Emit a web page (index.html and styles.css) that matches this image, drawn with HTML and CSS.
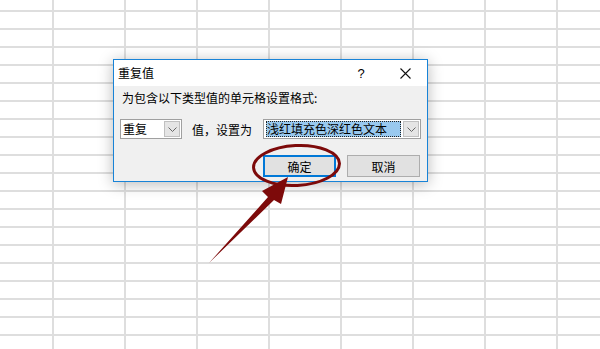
FILE: index.html
```html
<!DOCTYPE html>
<html lang="zh-CN">
<head>
    <meta charset="UTF-8">
    <meta name="viewport" content="width=device-width, initial-scale=1.0">
    <title>重复值</title>
    <link rel="stylesheet" href="styles.css">
</head>
<body>
    <div class="sheet"></div>

    <div class="dialog">
        <div class="titlebar">
            <span class="title">重复值</span>
            <span class="tb-btn help">?</span>
            <span class="tb-btn close">
                <svg width="11" height="11" viewBox="0 0 11 11">
                    <path d="M0.5 0.5 L10.5 10.5 M10.5 0.5 L0.5 10.5" stroke="#111" stroke-width="1.1" fill="none"/>
                </svg>
            </span>
        </div>
        <div class="dialog-body">
            <div class="label">为包含以下类型值的单元格设置格式:</div>
            <div class="row">
                <div class="combo small">
                    <span class="combo-text">重复</span>
                    <span class="drop">
                        <svg width="9" height="5" viewBox="0 0 9 5"><path d="M0.5 0.5 L4.5 4.5 L8.5 0.5" stroke="#666" fill="none"/></svg>
                    </span>
                </div>
                <span class="row-text">值，设置为</span>
                <div class="combo wide">
                    <span class="combo-text selected">浅红填充色深红色文本</span>
                    <span class="drop">
                        <svg width="9" height="5" viewBox="0 0 9 5"><path d="M0.5 0.5 L4.5 4.5 L8.5 0.5" stroke="#666" fill="none"/></svg>
                    </span>
                </div>
            </div>
            <div class="buttons">
                <button class="btn default">确定</button>
                <button class="btn">取消</button>
            </div>
        </div>
    </div>

    <!-- annotation drawn over the screenshot -->
    <svg class="mark" width="600" height="349" viewBox="0 0 600 349">
        <ellipse cx="296.5" cy="165.5" rx="43" ry="20" transform="rotate(-3 296.5 165.5)" fill="none" stroke="#7d0a0a" stroke-width="3"/>
        <polygon points="209,263 268,197 262,191 288,177 281,204 274,200" fill="#7d0a0a"/>
    </svg>
</body>
</html>
```

FILE: styles.css
```css
body {
    margin: 0;
    width: 600px;
    height: 349px;
    overflow: hidden;
    background: #fff;
    font-family: "Noto Sans CJK SC", "Microsoft YaHei", sans-serif;
    font-size: 12px;
    color: #000;
    position: relative;
}
.sheet {
    width: 600px;
    height: 349px;
    background-image:
        linear-gradient(to right, #dedede 2px, transparent 2px),
        linear-gradient(to bottom, #dedede 2px, transparent 2px);
    background-size: 72px 100%, 100% 18px;
    background-position: 52px 0, 0 10px;
}
.dialog {
    position: absolute;
    left: 113px;
    top: 59px;
    width: 313px;
    height: 121px;
    border: 1px solid #1883d7;
    background: #f0f0f0;
    box-shadow: 0 2px 14px rgba(0, 0, 0, 0.28);
    display: flex;
    flex-direction: column;
}
.titlebar {
    height: 26px;
    background: #fff;
    display: flex;
    align-items: center;
}
.title {
    flex: 1;
    padding-left: 4px;
    line-height: 26px;
}
.tb-btn {
    width: 44px;
    height: 26px;
    display: flex;
    align-items: center;
    justify-content: center;
}
.help {
    font-family: "Liberation Sans", sans-serif;
    font-size: 13px;
}
.dialog-body {
    padding: 2px 6px 0 6px;
}
.label {
    line-height: 20px;
    padding-left: 2px;
}
.row {
    display: flex;
    align-items: center;
    margin-top: 11px;
    height: 20px;
}
.combo {
    box-sizing: border-box;
    height: 20px;
    border: 1px solid #a0a0a0;
    background: #fff;
    display: flex;
    align-items: center;
    padding: 0 1px 0 2px;
    flex-shrink: 0;
}
.combo.small {
    width: 62px;
}
.combo.wide {
    width: 158px;
}
.combo-text {
    flex: 1;
    line-height: 16px;
    white-space: nowrap;
}
.combo-text.selected {
    background: #99c9ef;
    outline: 1px dotted #222;
    outline-offset: -1px;
    margin-right: 2px;
    padding-left: 1px;
}
.drop {
    width: 16px;
    height: 16px;
    background: #e5e5e5;
    border: 1px solid #c0c0c0;
    box-sizing: border-box;
    display: flex;
    align-items: center;
    justify-content: center;
}
.row-text {
    white-space: nowrap;
    flex-shrink: 0;
    margin: 0 11px 0 10px;
}
.buttons {
    display: flex;
    justify-content: flex-end;
    gap: 11px;
    margin-top: 16px;
    padding-right: 1px;
}
.btn {
    width: 73px;
    height: 22px;
    background: #e1e1e1;
    border: 1px solid #adadad;
    font-family: inherit;
    font-size: 12px;
    padding: 0;
    color: #000;
}
.btn.default {
    border: 2px solid #0078d7;
}
.mark {
    position: absolute;
    left: 0;
    top: 0;
    pointer-events: none;
}
```
